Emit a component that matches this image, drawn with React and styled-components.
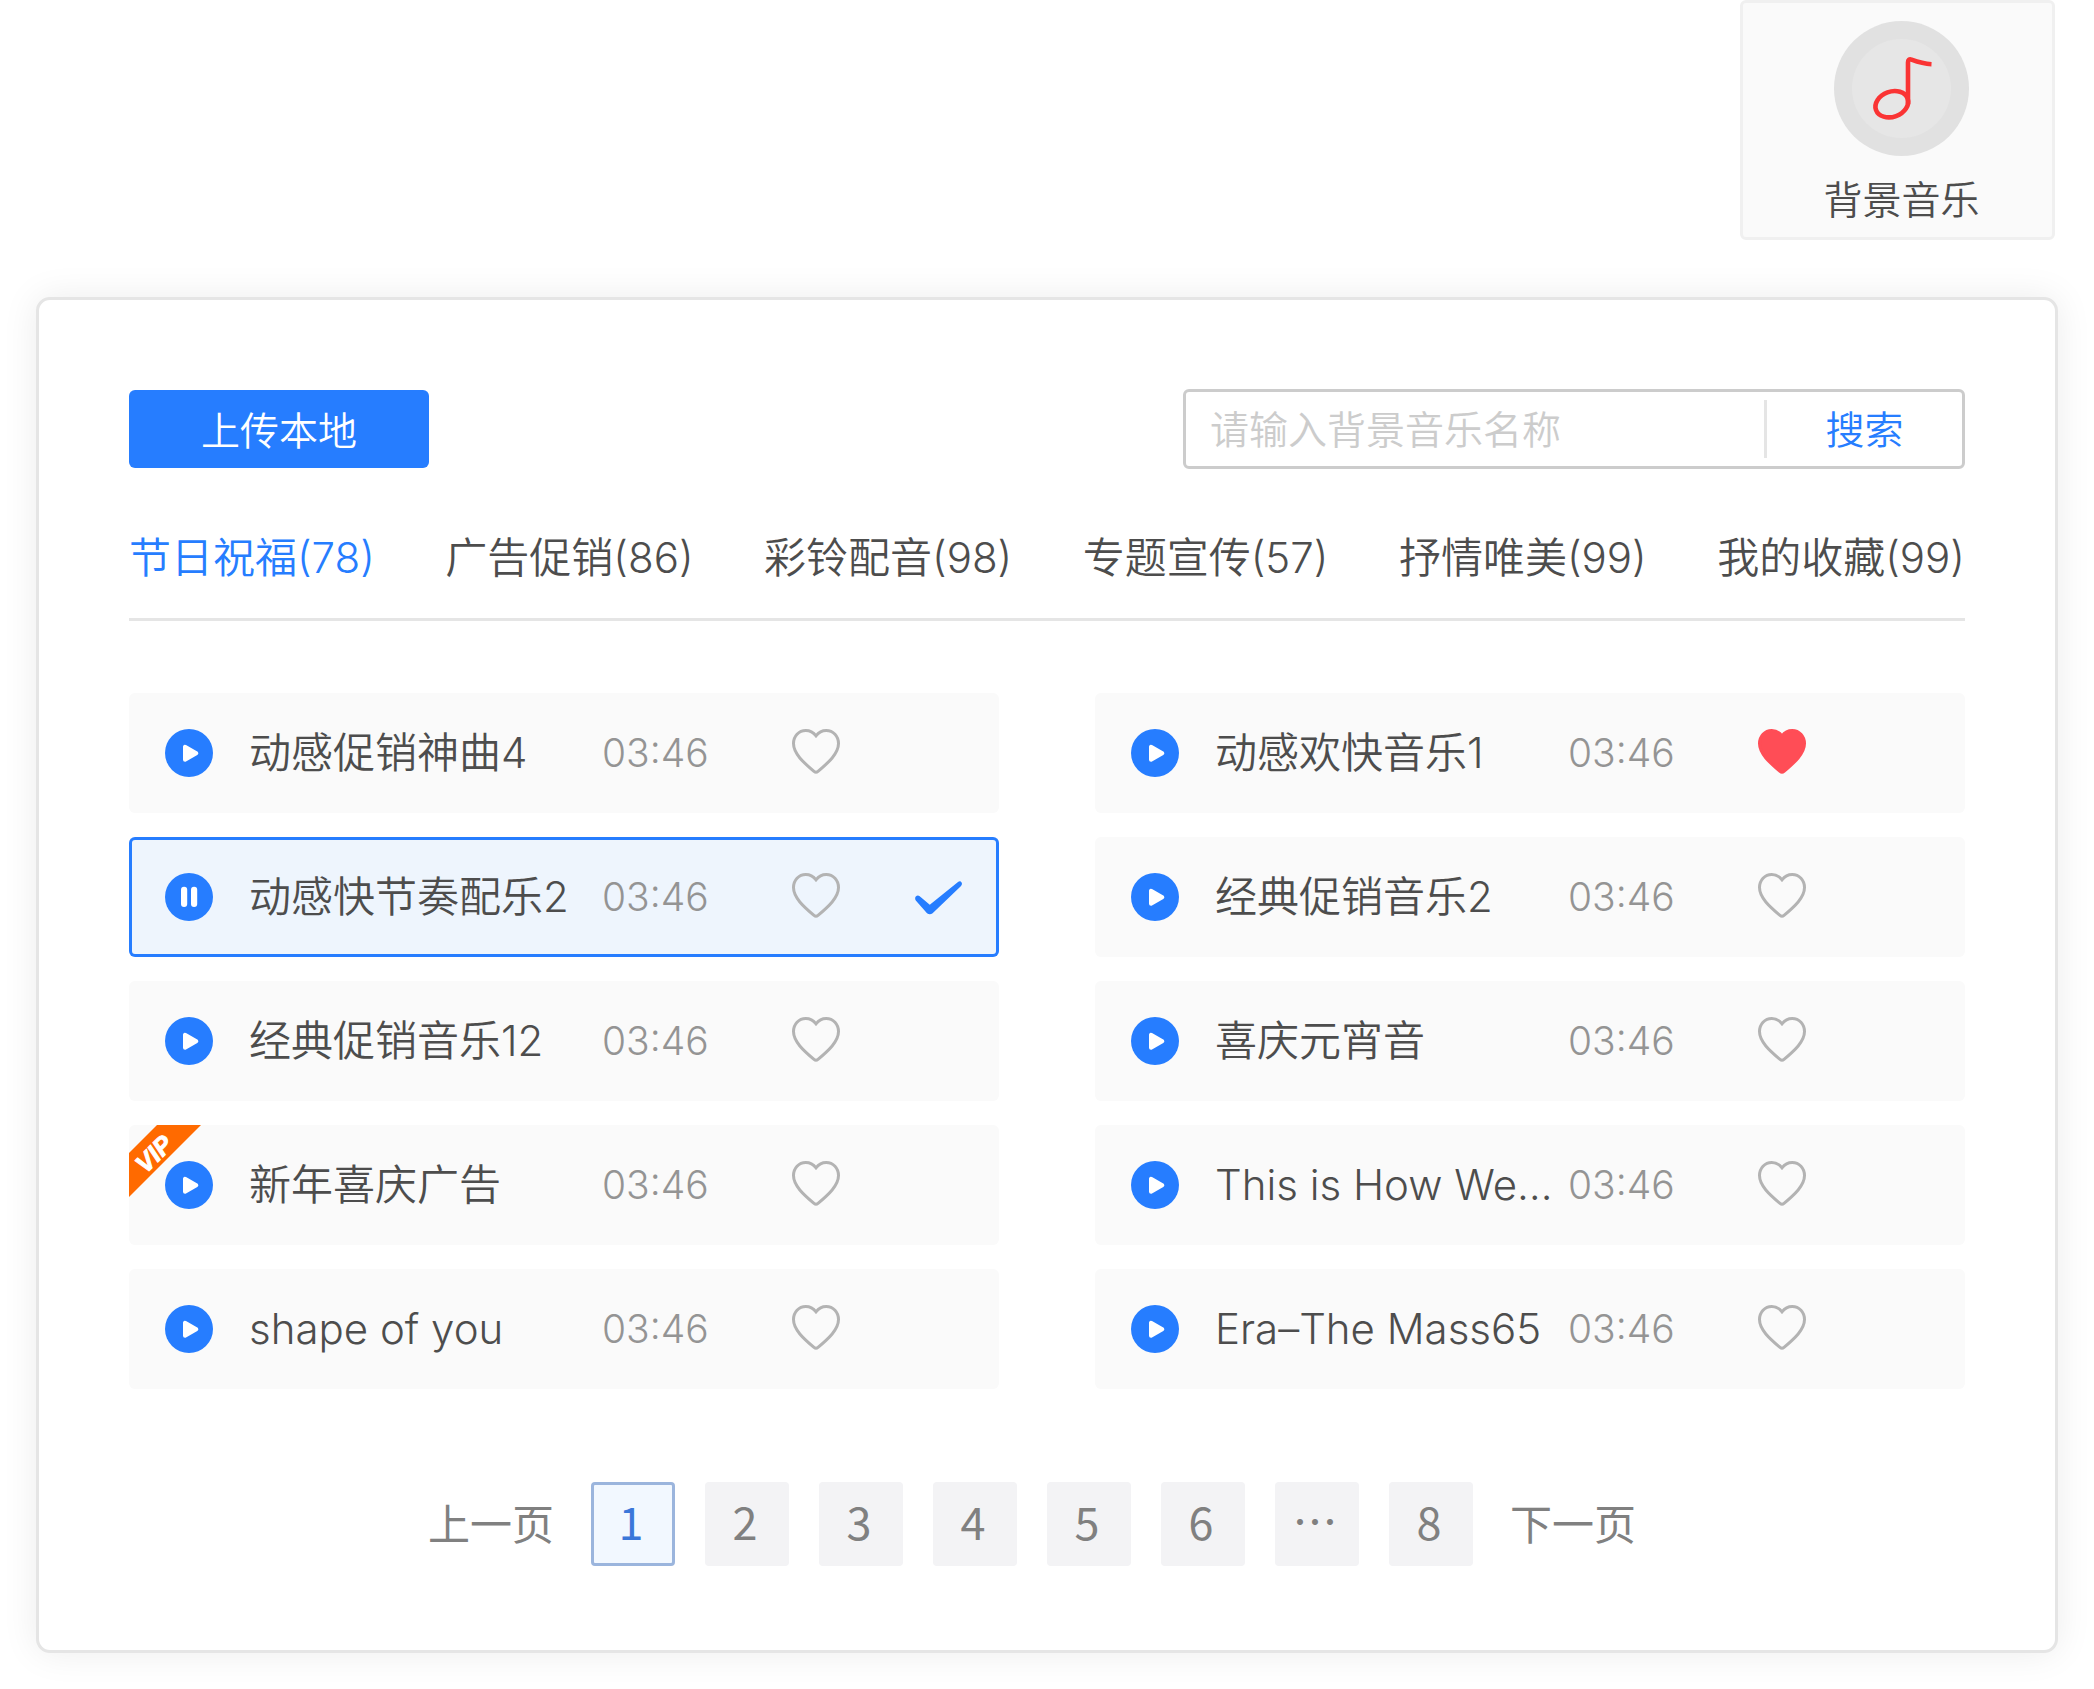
import React, { useState } from "react";
import styled, { createGlobalStyle } from "styled-components";

const GlobalStyle = createGlobalStyle`
  * {
    box-sizing: border-box;
  }

  body {
    margin: 0;
    background: #fff;
    color: #4d4d4d;
    font-family: Inter, "Noto Sans CJK SC", sans-serif;
    font-weight: 350;
  }

  button,
  input {
    margin: 0;
    padding: 0;
    border: 0;
    background: none;
    color: inherit;
    font: inherit;
  }

  button {
    cursor: pointer;
  }
`;

const Page = styled.div`
  display: flex;
  flex-direction: column;
  gap: 57px;
  padding: 0 36px 36px;
`;

const MusicTile = styled.button`
  display: flex;
  flex-direction: column;
  align-items: center;
  align-self: flex-end;
  gap: 14px;
  width: 315px;
  height: 240px;
  margin-right: 3px;
  padding: 18px 0 0 8px;
  border: 3px solid #f0f0f0;
  border-radius: 6px;
  background: #fafafa;
  font-size: 39px;
  line-height: 60px;
`;

const Panel = styled.main`
  padding: 89px 90px 84px;
  border: 3px solid #e5e5e5;
  border-radius: 14px;
  background: #fff;
  box-shadow: 0 0 36px rgba(0, 0, 0, 0.08);
`;

const Toolbar = styled.div`
  display: flex;
  align-items: center;
  justify-content: space-between;
`;

const UploadButton = styled.button`
  width: 300px;
  height: 78px;
  padding-bottom: 2px;
  border-radius: 6px;
  background: #267dff;
  color: #fff;
  font-size: 39px;
`;

const SearchBox = styled.form`
  display: flex;
  align-items: center;
  width: 782px;
  height: 80px;
  border: 3px solid #ccc;
  border-radius: 6px;

  input {
    flex: 1;
    min-width: 0;
    padding: 0 24px;
    font-size: 39px;
    outline: none;
  }

  input::placeholder {
    color: #ccc;
    opacity: 1;
  }

  button {
    width: 198px;
    height: 58px;
    border-left: 3px solid #e5e5e5;
    color: #267dff;
    font-size: 39px;
    line-height: 60px;
  }
`;

const Tabs = styled.nav`
  display: flex;
  justify-content: space-between;
  margin-top: 59px;
  padding-bottom: 30px;
  border-bottom: 3px solid #e5e5e5;
`;

const Tab = styled.button`
  color: ${({ $active }) => ($active ? "#267dff" : "#4d4d4d")};
  font-size: 42px;
  line-height: 60px;
  white-space: nowrap;
`;

const SongGrid = styled.ul`
  display: grid;
  grid-template-columns: 1fr 1fr;
  gap: 24px 96px;
  margin: 72px 0 0;
  padding: 0;
  list-style-type: none;
`;

const SongRow = styled.li`
  position: relative;
  display: flex;
  align-items: center;
  height: 120px;
  padding: 0 36px;
  border-radius: 6px;
  background: ${({ $selected }) => ($selected ? "#eef5fd" : "#fafafa")};
  box-shadow: ${({ $selected }) =>
    $selected ? "inset 0 0 0 3px #267dff" : "none"};
`;

const IconButton = styled.button`
  flex: none;
  width: 48px;
  height: 48px;

  svg {
    display: block;
  }
`;

const SongTitle = styled.span`
  flex: 1;
  min-width: 0;
  margin-left: 36px;
  font-size: 42px;
  line-height: 60px;
  white-space: nowrap;
`;

const SongTime = styled.time`
  flex: none;
  width: 190px;
  color: #949494;
  font-size: 39px;
  line-height: 60px;
`;

const CheckSlot = styled.span`
  flex: none;
  display: flex;
  width: 48px;
  margin-left: 75px;
`;

const VipRibbon = styled.svg`
  position: absolute;
  top: 0;
  left: 0;
`;

const Pager = styled.nav`
  display: flex;
  align-items: center;
  justify-content: center;
  gap: 30px;
  margin-top: 93px;
  padding-right: 30px;
  color: #808080;
  font-family: "Noto Sans CJK SC", sans-serif;
  font-weight: 400;
`;

const PageStep = styled.button`
  margin: 0 7px;
  padding-bottom: 4px;
  font-size: 42px;
  line-height: 60px;
`;

const PageNumber = styled.button`
  width: 84px;
  height: 84px;
  padding: 0 4px 6px 0;
  border: ${({ $active }) => ($active ? "3px solid #9bb5dd" : "0")};
  border-radius: 4px;
  background: ${({ $active }) => ($active ? "#f2f8ff" : "#f3f3f5")};
  color: ${({ $active }) => ($active ? "#3b77d9" : "#808080")};
  font-size: 45px;
  line-height: 60px;
`;

const tabs = [
  "节日祝福(78)",
  "广告促销(86)",
  "彩铃配音(98)",
  "专题宣传(57)",
  "抒情唯美(99)",
  "我的收藏(99)",
];

const songs = [
  { title: "动感促销神曲4", time: "03:46" },
  { title: "动感欢快音乐1", time: "03:46", liked: true },
  { title: "动感快节奏配乐2", time: "03:46" },
  { title: "经典促销音乐2", time: "03:46" },
  { title: "经典促销音乐12", time: "03:46" },
  { title: "喜庆元宵音", time: "03:46" },
  { title: "新年喜庆广告", time: "03:46", vip: true },
  { title: "This is How We…", time: "03:46" },
  { title: "shape of you", time: "03:46" },
  { title: "Era–The Mass65", time: "03:46" },
];

const pages = ["1", "2", "3", "4", "5", "6", "…", "8"];

function NoteIcon() {
  return (
    <svg width="135" height="135" viewBox="0 0 135 135" aria-hidden="true">
      <circle cx="67.5" cy="67.5" r="67.5" fill="#e1e1e1" />
      <circle cx="67.5" cy="67.5" r="49.5" fill="#e6e6e6" />
      <g fill="none" stroke="#fa3434" strokeWidth="4.6">
        <ellipse
          cx="57.8"
          cy="83.2"
          rx="16.8"
          ry="12.6"
          transform="rotate(-20 57.8 83.2)"
        />
        <path d="M74 83V41.5Q74 37.6 77.5 38.6C84 41 90 42.8 97.5 43.2" />
      </g>
    </svg>
  );
}

function PlayIcon() {
  return (
    <svg width="48" height="48" viewBox="0 0 48 48" aria-hidden="true">
      <circle cx="24" cy="24" r="24" fill="#267dff" />
      <path
        d="M20 17.8v13L31.3 24.3z"
        fill="#fff"
        stroke="#fff"
        strokeWidth="4"
        strokeLinejoin="round"
      />
    </svg>
  );
}

function PauseIcon() {
  return (
    <svg width="48" height="48" viewBox="0 0 48 48" aria-hidden="true">
      <circle cx="24" cy="24" r="24" fill="#267dff" />
      <rect x="16" y="13.7" width="6.2" height="20.4" rx="3" fill="#fff" />
      <rect x="26" y="13.7" width="6.2" height="20.4" rx="3" fill="#fff" />
    </svg>
  );
}

function HeartIcon({ filled }) {
  const color = filled ? "#ff4d56" : "#b3b3b3";
  return (
    <svg width="48" height="48" viewBox="0 0 48 48" aria-hidden="true">
      <path
        d="M24 6.8C21.4 3.4 17.8 1.5 13.8 1.5 6.8 1.5 1.5 7.2 1.5 14.6 1.5 24.6 11.6 33.6 22 42.4Q24 44.1 26 42.4C36.4 33.6 46.5 24.6 46.5 14.6 46.5 7.2 41.2 1.5 34.2 1.5 30.2 1.5 26.6 3.4 24 6.8Z"
        fill={filled ? color : "none"}
        stroke={color}
        strokeWidth="3"
      />
    </svg>
  );
}

function CheckIcon() {
  return (
    <svg width="48" height="36" viewBox="0 0 48 36" aria-hidden="true">
      <path
        d="M4.4 16.9L14.8 25.8 43 2.9Q45.4 1.5 46.6 3.4 47.6 5.4 45.8 7.2L17.6 34.2Q14.8 36.4 12 34.2L1 21.8Q-.6 19.4 .8 17.6 2.5 15.7 4.4 16.9Z"
        fill="#267dff"
      />
    </svg>
  );
}

function VipBadge() {
  return (
    <VipRibbon width="72" height="72" viewBox="0 0 72 72">
      <path d="M28 0H72L0 72V28z" fill="#ff6a00" />
      <text
        x="0"
        y="0"
        transform="translate(31 35) rotate(-45)"
        textAnchor="middle"
        fill="#fff"
        stroke="#fff"
        strokeWidth="1"
        fontFamily="Liberation Sans Narrow, Liberation Sans, sans-serif"
        fontSize="25"
        fontStyle="italic"
        fontWeight="700"
      >
        VIP
      </text>
    </VipRibbon>
  );
}

function Song({ song, selected, onToggle }) {
  return (
    <SongRow $selected={selected}>
      {song.vip && <VipBadge />}
      <IconButton
        type="button"
        aria-label={selected ? "暂停" : "播放"}
        onClick={onToggle}
      >
        {selected ? <PauseIcon /> : <PlayIcon />}
      </IconButton>
      <SongTitle>{song.title}</SongTitle>
      <SongTime>{song.time}</SongTime>
      <IconButton type="button" aria-label="收藏">
        <HeartIcon filled={song.liked} />
      </IconButton>
      <CheckSlot>{selected && <CheckIcon />}</CheckSlot>
    </SongRow>
  );
}

function App() {
  const [activeTab, setActiveTab] = useState(0);
  const [selected, setSelected] = useState(2);
  const [page, setPage] = useState("1");

  return (
    <Page>
      <GlobalStyle />
      <MusicTile type="button">
        <NoteIcon />
        背景音乐
      </MusicTile>
      <Panel>
        <Toolbar>
          <UploadButton type="button">上传本地</UploadButton>
          <SearchBox onSubmit={(e) => e.preventDefault()}>
            <input
              type="text"
              aria-label="背景音乐名称"
              placeholder="请输入背景音乐名称"
            />
            <button type="submit">搜索</button>
          </SearchBox>
        </Toolbar>
        <Tabs>
          {tabs.map((tab, i) => (
            <Tab
              key={tab}
              type="button"
              $active={i === activeTab}
              onClick={() => setActiveTab(i)}
            >
              {tab}
            </Tab>
          ))}
        </Tabs>
        <SongGrid>
          {songs.map((song, i) => (
            <Song
              key={song.title}
              song={song}
              selected={i === selected}
              onToggle={() => setSelected(i === selected ? null : i)}
            />
          ))}
        </SongGrid>
        <Pager>
          <PageStep type="button">上一页</PageStep>
          {pages.map((p) => (
            <PageNumber
              key={p}
              type="button"
              $active={p === page}
              onClick={() => setPage(p)}
            >
              {p}
            </PageNumber>
          ))}
          <PageStep type="button">下一页</PageStep>
        </Pager>
      </Panel>
    </Page>
  );
}

export default App;
